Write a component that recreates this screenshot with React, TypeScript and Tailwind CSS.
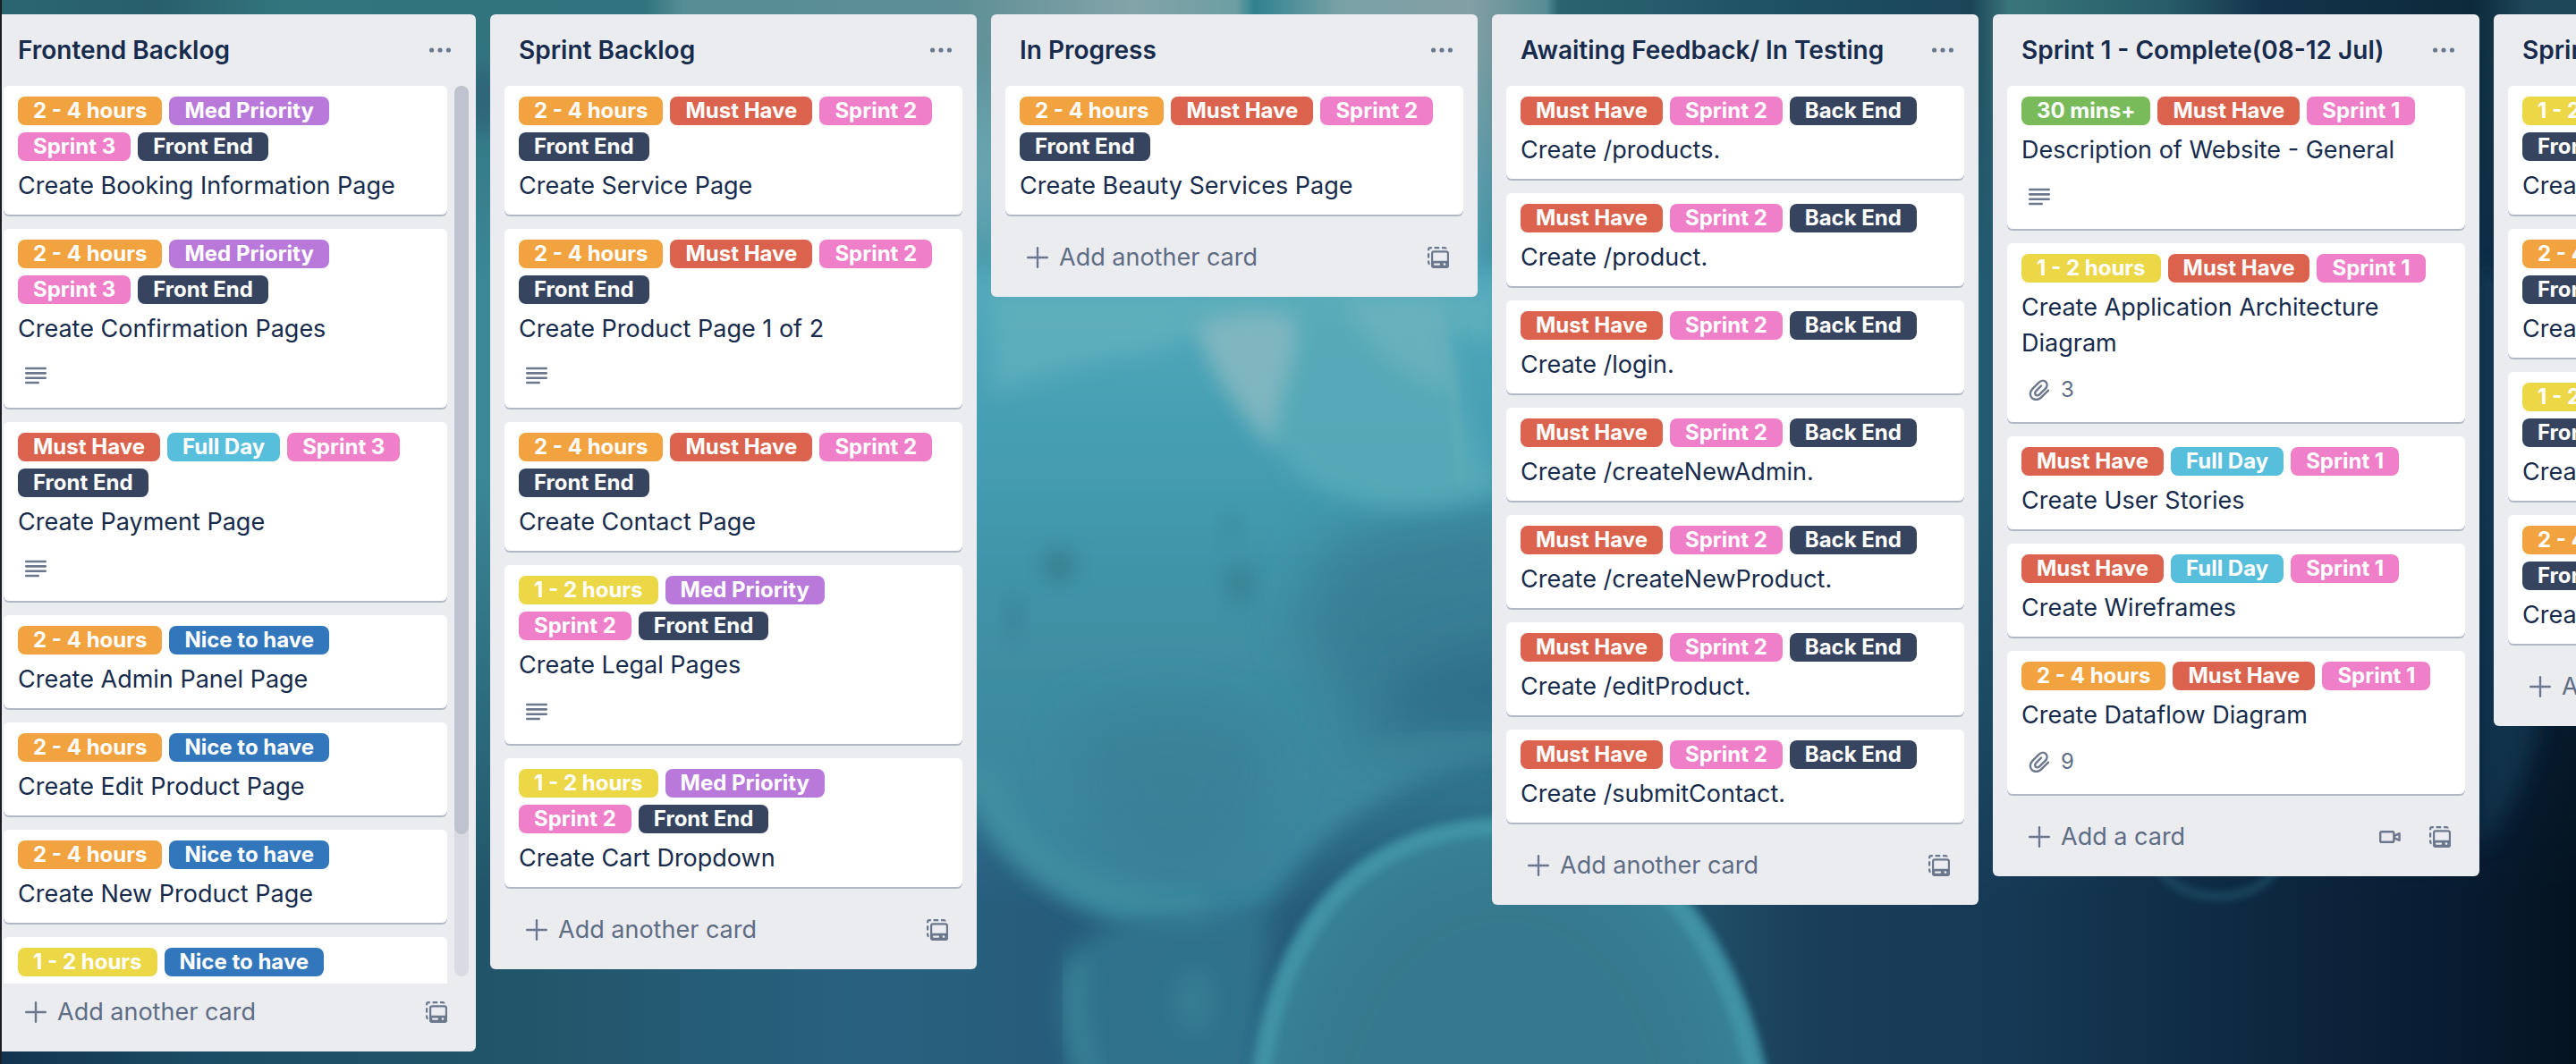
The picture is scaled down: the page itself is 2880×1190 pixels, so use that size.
import React from "react";

type LabelKind = "h24" | "h12" | "m30" | "must" | "med" | "nice" | "day" | "s1" | "s2" | "s3" | "front" | "back";

const LABELS: Record<LabelKind, { text: string; color: string }> = {
  h24: { text: "2 - 4 hours", color: "bg-[#f2a23f]" },
  h12: { text: "1 - 2 hours", color: "bg-[#ecd747]" },
  m30: { text: "30 mins+", color: "bg-[#79bb5b]" },
  must: { text: "Must Have", color: "bg-[#db634d]" },
  med: { text: "Med Priority", color: "bg-[#b879db]" },
  nice: { text: "Nice to have", color: "bg-[#3277bb]" },
  day: { text: "Full Day", color: "bg-[#57bedc]" },
  s1: { text: "Sprint 1", color: "bg-[#ef7fc8]" },
  s2: { text: "Sprint 2", color: "bg-[#ef7fc8]" },
  s3: { text: "Sprint 3", color: "bg-[#ef7fc8]" },
  front: { text: "Front End", color: "bg-[#374460]" },
  back: { text: "Back End", color: "bg-[#374460]" },
};

type CardData = { title: string; labels: LabelKind[]; description?: boolean; attachments?: number };
type ListData = { title: string; cards: CardData[]; add: string; video?: boolean; scrolls?: boolean };

const LISTS: ListData[] = [
  {
    title: "Frontend Backlog",
    add: "Add another card",
    scrolls: true,
    cards: [
      { title: "Create Booking Information Page", labels: ["h24", "med", "s3", "front"] },
      { title: "Create Confirmation Pages", labels: ["h24", "med", "s3", "front"], description: true },
      { title: "Create Payment Page", labels: ["must", "day", "s3", "front"], description: true },
      { title: "Create Admin Panel Page", labels: ["h24", "nice"] },
      { title: "Create Edit Product Page", labels: ["h24", "nice"] },
      { title: "Create New Product Page", labels: ["h24", "nice"] },
      { title: "", labels: ["h12", "nice"] },
    ],
  },
  {
    title: "Sprint Backlog",
    add: "Add another card",
    cards: [
      { title: "Create Service Page", labels: ["h24", "must", "s2", "front"] },
      { title: "Create Product Page 1 of 2", labels: ["h24", "must", "s2", "front"], description: true },
      { title: "Create Contact Page", labels: ["h24", "must", "s2", "front"] },
      { title: "Create Legal Pages", labels: ["h12", "med", "s2", "front"], description: true },
      { title: "Create Cart Dropdown", labels: ["h12", "med", "s2", "front"] },
    ],
  },
  {
    title: "In Progress",
    add: "Add another card",
    cards: [{ title: "Create Beauty Services Page", labels: ["h24", "must", "s2", "front"] }],
  },
  {
    title: "Awaiting Feedback/ In Testing",
    add: "Add another card",
    cards: [
      { title: "Create /products.", labels: ["must", "s2", "back"] },
      { title: "Create /product.", labels: ["must", "s2", "back"] },
      { title: "Create /login.", labels: ["must", "s2", "back"] },
      { title: "Create /createNewAdmin.", labels: ["must", "s2", "back"] },
      { title: "Create /createNewProduct.", labels: ["must", "s2", "back"] },
      { title: "Create /editProduct.", labels: ["must", "s2", "back"] },
      { title: "Create /submitContact.", labels: ["must", "s2", "back"] },
    ],
  },
  {
    title: "Sprint 1 - Complete(08-12 Jul)",
    add: "Add a card",
    video: true,
    cards: [
      { title: "Description of Website - General", labels: ["m30", "must", "s1"], description: true },
      { title: "Create Application Architecture Diagram", labels: ["h12", "must", "s1"], attachments: 3 },
      { title: "Create User Stories", labels: ["must", "day", "s1"] },
      { title: "Create Wireframes", labels: ["must", "day", "s1"] },
      { title: "Create Dataflow Diagram", labels: ["h24", "must", "s1"], attachments: 9 },
    ],
  },
  {
    title: "Sprint 2",
    add: "Add a card",
    cards: [
      { title: "Create", labels: ["h12", "must", "s2", "front"] },
      { title: "Create", labels: ["h24", "must", "s2", "front"] },
      { title: "Create", labels: ["h12", "must", "s2", "front"] },
      { title: "Create", labels: ["h24", "must", "s2", "front"] },
    ],
  },
];

function DotsIcon() {
  return (
    <svg viewBox="0 0 24 24" className="size-6" fill="#6b778c">
      <circle cx="2.6" cy="12" r="2.6" />
      <circle cx="12" cy="12" r="2.6" />
      <circle cx="21.4" cy="12" r="2.6" />
    </svg>
  );
}

function DescriptionIcon() {
  return (
    <svg viewBox="0 0 24 24" className="size-6" stroke="#6b778c" strokeWidth="2.6" strokeLinecap="round">
      <path d="M1.3 4h21.4M1.3 9.4h21.4M1.3 14.7h21.4M1.3 20h13.4" />
    </svg>
  );
}

function PlusIcon() {
  return (
    <svg viewBox="0 0 24 24" className="size-6" stroke="#6b778c" strokeWidth="2.4" strokeLinecap="round">
      <path d="M12 1.2v21.6M1.2 12h21.6" />
    </svg>
  );
}

function AttachmentIcon() {
  return (
    <svg viewBox="0 0 24 24" className="size-6" fill="none" stroke="#6b778c" strokeWidth="2.4" strokeLinecap="round" strokeLinejoin="round">
      <path d="M22 12.6l-7.8 7.8c-3.4 3.4-7.8 3.2-10.4.8-2.6-2.6-2.8-7 .6-10.4l7-7c2.4-2.4 5.8-2.6 7.8-.7 2 2 1.8 5.3-.6 7.7l-6.4 6.4c-1.3 1.3-3.2 1.5-4.3.4-1.1-1.1-.9-3 .4-4.3l5.8-5.8" />
    </svg>
  );
}

function TemplateIcon() {
  return (
    <svg viewBox="0 0 24 24" className="size-6" fill="none" stroke="#6b778c" strokeWidth="2.2">
      <path d="M1.1 4.2V3.2Q1.1 1.1 3.2 1.1h1.6M7.6 1.1h5.6M16 1.1h3.2Q20.6 1.2 20.8 2.4M1.1 7.2v5.4M1.1 15.4v2q0 1.6 1.5 1.9" />
      <rect x="5.1" y="5.3" width="17.8" height="17.4" rx="2.2" />
      <path d="M4 15.8h20v5.2q0 3-3 3H7q-3 0-3-3z" fill="#6b778c" stroke="none" />
      <path d="M8 19.6h5" stroke="#ebecf0" strokeLinecap="round" />
      <circle cx="19" cy="19.6" r="1.3" fill="#ebecf0" stroke="none" />
    </svg>
  );
}

function VideoIcon() {
  return (
    <svg viewBox="0 0 24 24" className="size-6" fill="none" stroke="#6b778c" strokeWidth="2.4" strokeLinejoin="round">
      <rect x="1.2" y="6.2" width="15.2" height="11.6" rx="1.6" />
      <path d="M17.2 10.6l5.4-2.4v7.6l-5.4-2.4z" />
    </svg>
  );
}

function Label({ kind }: { kind: LabelKind }) {
  const { text, color } = LABELS[kind];
  return <span className={`h-8 rounded-lg px-[17px] text-2xl/8 font-bold whitespace-nowrap text-white ${color}`}>{text}</span>;
}

function Card({ card }: { card: CardData }) {
  return (
    <li className="shrink-0 rounded-md bg-white px-4 pt-3 pb-1 shadow-[0_2px_0_#b3b8c7]">
      <div className="flex flex-wrap gap-2 pr-2">
        {card.labels.map((kind) => (
          <Label key={kind} kind={kind} />
        ))}
      </div>
      <p className="my-2 min-h-10 text-[27px] leading-10 text-[#172b4d]">{card.title}</p>
      {(card.description || card.attachments) && (
        <div className="mb-2 flex h-12 items-center gap-3 pl-2 text-2xl text-[#5e6c84]">
          {card.description ? <DescriptionIcon /> : <AttachmentIcon />}
          {card.attachments && <span>{card.attachments}</span>}
        </div>
      )}
    </li>
  );
}

function List({ list }: { list: ListData }) {
  return (
    <section className="flex max-h-full w-[544px] shrink-0 flex-col rounded-md bg-[#ebecf0] pb-3">
      <header className="flex h-20 shrink-0 items-center justify-between pr-7 pl-8">
        <h2 className="text-[28px] font-semibold text-[#172b4d]">{list.title}</h2>
        <button type="button" aria-label={`${list.title} actions`}>
          <DotsIcon />
        </button>
      </header>
      <div className="flex min-h-0 pl-4">
        <ul className={`flex min-w-0 flex-1 flex-col gap-4 overflow-hidden ${list.scrolls ? "" : "pb-4"}`}>
          {list.cards.map((card, i) => (
            <Card key={i} card={card} />
          ))}
        </ul>
        {list.scrolls ? (
          <div className="mr-2 mb-2 ml-2 flex w-4 flex-col rounded-full bg-[#dadbe2]">
            <div className="h-[84%] rounded-full bg-[#bfc3d0]" />
          </div>
        ) : (
          <div className="w-4" />
        )}
      </div>
      <footer className="flex h-16 shrink-0 items-center pr-8 pl-10">
        <button type="button" className="flex flex-1 items-center gap-3 text-[27px] text-[#5e6c84]">
          <PlusIcon />
          {list.add}
        </button>
        {list.video && (
          <button type="button" aria-label="Record a video" className="mr-8">
            <VideoIcon />
          </button>
        )}
        <button type="button" aria-label="Create from template">
          <TemplateIcon />
        </button>
      </footer>
    </section>
  );
}

/* Underwater jellyfish wallpaper. */
function Wallpaper() {
  return (
    <svg aria-hidden="true" viewBox="0 0 2880 1190" preserveAspectRatio="none" className="absolute inset-0 size-full">
      <defs>
        <linearGradient id="sea" x1="0" x2="1" y1="0" y2="0">
          <stop offset="0" stopColor="#2c6574" />
          <stop offset="0.19" stopColor="#3b8798" />
          <stop offset="0.38" stopColor="#4599ab" />
          <stop offset="0.575" stopColor="#4399ad" />
          <stop offset="0.62" stopColor="#1f5368" />
          <stop offset="0.77" stopColor="#235b72" />
          <stop offset="0.88" stopColor="#0e2b43" />
          <stop offset="0.96" stopColor="#0f2d48" />
          <stop offset="1" stopColor="#0a2238" />
        </linearGradient>
        <linearGradient id="surface" x1="0" x2="1" y1="0" y2="0">
          <stop offset="0" stopColor="#2a6672" />
          <stop offset="0.06" stopColor="#295f6c" />
          <stop offset="0.11" stopColor="#32757d" />
          <stop offset="0.25" stopColor="#31737e" />
          <stop offset="0.265" stopColor="#578d94" />
          <stop offset="0.37" stopColor="#5d8e95" />
          <stop offset="0.44" stopColor="#83a4a9" />
          <stop offset="0.48" stopColor="#6c9ea3" />
          <stop offset="0.487" stopColor="#2f8290" />
          <stop offset="0.52" stopColor="#78a1a6" />
          <stop offset="0.57" stopColor="#839fa4" />
          <stop offset="0.6" stopColor="#578d95" />
          <stop offset="0.605" stopColor="#2b6470" />
          <stop offset="0.7" stopColor="#1d4f62" />
          <stop offset="0.765" stopColor="#1c4558" />
          <stop offset="0.78" stopColor="#397679" />
          <stop offset="0.84" stopColor="#275d69" />
          <stop offset="0.88" stopColor="#14324a" />
          <stop offset="0.96" stopColor="#0d2a3b" />
          <stop offset="0.98" stopColor="#1d4658" />
          <stop offset="1" stopColor="#1d4658" />
        </linearGradient>
        <linearGradient id="deep" x1="0" x2="1" y1="0" y2="0">
          <stop offset="0" stopColor="#12334f" />
          <stop offset="0.08" stopColor="#1c4d66" />
          <stop offset="0.2" stopColor="#215569" />
          <stop offset="0.33" stopColor="#28617f" />
          <stop offset="0.46" stopColor="#265a78" />
          <stop offset="0.6" stopColor="#2b6780" />
          <stop offset="0.7" stopColor="#1a3f5a" />
          <stop offset="0.78" stopColor="#163955" />
          <stop offset="0.86" stopColor="#0f2b43" />
          <stop offset="0.95" stopColor="#081c32" />
          <stop offset="1" stopColor="#041320" />
        </linearGradient>
        <linearGradient id="fade" x1="0" x2="0" y1="0" y2="1">
          <stop offset="0.45" stopColor="#fff" stopOpacity="0" />
          <stop offset="0.85" stopColor="#fff" />
        </linearGradient>
        <linearGradient id="top" x1="0" x2="0" y1="0" y2="1">
          <stop offset="0.04" stopColor="#fff" />
          <stop offset="0.26" stopColor="#fff" stopOpacity="0" />
        </linearGradient>
        <mask id="lower">
          <rect width="2880" height="1190" fill="url(#fade)" />
        </mask>
        <mask id="upper">
          <rect width="2880" height="1190" fill="url(#top)" />
        </mask>
        <linearGradient id="body" x1="0" x2="0" y1="330" y2="1060" gradientUnits="userSpaceOnUse">
          <stop offset="0" stopColor="#52a9b9" />
          <stop offset="0.2" stopColor="#459fb3" />
          <stop offset="0.55" stopColor="#3f8ea2" />
          <stop offset="1" stopColor="#38819a" />
        </linearGradient>
        <filter id="blurS" x="-30%" y="-30%" width="160%" height="160%">
          <feGaussianBlur stdDeviation="5" />
        </filter>
        <filter id="blurM" x="-50%" y="-50%" width="200%" height="200%">
          <feGaussianBlur stdDeviation="12" />
        </filter>
        <filter id="blurL" x="-50%" y="-50%" width="200%" height="200%">
          <feGaussianBlur stdDeviation="30" />
        </filter>
      </defs>
      <rect width="2880" height="1190" fill="url(#sea)" />
      <rect width="2880" height="1190" fill="url(#deep)" mask="url(#lower)" />
      <rect width="2880" height="1190" fill="url(#surface)" mask="url(#upper)" />
      <ellipse cx="1100" cy="190" rx="16" ry="90" fill="#84b9c1" filter="url(#blurL)" />
      <ellipse cx="540" cy="110" rx="20" ry="40" fill="#2d6576" filter="url(#blurM)" />

      {/* large bell in the middle of the frame */}
      <path
        d="M1040 300H1720V820C1640 850 1500 890 1430 1000C1400 1035 1340 1040 1260 1035C1180 1010 1110 960 1075 880C1050 800 1040 500 1040 300Z"
        fill="url(#body)"
        filter="url(#blurM)"
      />
      <path d="M1500 600Q1600 570 1740 560V850Q1620 830 1530 850Q1480 760 1450 700Q1460 640 1500 600Z" fill="#35788f" opacity="0.7" filter="url(#blurL)" />
      <path d="M1560 760Q1640 720 1740 720V840Q1630 800 1560 830Z" fill="#296884" opacity="0.7" filter="url(#blurL)" />
      <path d="M1510 850Q1610 825 1720 830" fill="none" stroke="#3d8599" strokeWidth="26" opacity="0.6" filter="url(#blurM)" />
      <path d="M1200 820Q1300 760 1420 820Q1420 960 1320 985Q1200 960 1200 820Z" fill="#377f94" opacity="0.7" filter="url(#blurL)" />
      <path d="M1092 860C1130 960 1210 1015 1350 1020" fill="none" stroke="#4596a2" strokeWidth="36" opacity="0.5" filter="url(#blurM)" />

      {/* pale translucent folds */}
      <path d="M1110 330H1670V380Q1500 350 1340 365Q1300 400 1240 400Q1160 420 1110 440Z" fill="#68b4c0" opacity="0.6" filter="url(#blurM)" />
      <path
        d="M1340 352C1420 325 1560 330 1610 350C1630 410 1640 480 1682 545C1620 575 1520 580 1450 530C1400 470 1360 420 1340 352Z"
        fill="#58abb9"
        opacity="0.85"
        filter="url(#blurM)"
      />
      <path d="M1335 365C1370 345 1440 345 1450 360C1450 420 1420 460 1425 505C1400 470 1365 440 1335 365Z" fill="#8abac1" opacity="0.8" filter="url(#blurM)" />
      <path d="M1500 335H1610L1625 440Q1560 420 1530 380Z" fill="#7ab8c1" opacity="0.5" filter="url(#blurM)" />
      <path d="M1605 345Q1630 430 1632 540" fill="none" stroke="#74b4bd" strokeWidth="7" opacity="0.4" filter="url(#blurS)" />

      {/* spots */}
      <ellipse cx="1184" cy="632" rx="18" ry="18" fill="#357384" opacity="0.7" filter="url(#blurM)" />
      <ellipse cx="1386" cy="652" rx="18" ry="24" fill="#36798a" opacity="0.6" filter="url(#blurM)" />
      <ellipse cx="1376" cy="590" rx="10" ry="14" fill="#38808f" opacity="0.5" filter="url(#blurM)" />
      <ellipse cx="1134" cy="690" rx="9" ry="26" fill="#377a90" opacity="0.6" filter="url(#blurM)" />

      {/* trailing shapes below the large bell */}
      <path d="M1200 1060Q1260 1010 1420 1020L1400 1250H1230Q1160 1140 1200 1060Z" fill="#317790" opacity="0.8" filter="url(#blurM)" />
      <path d="M1205 1075Q1190 1140 1225 1220" fill="none" stroke="#40909c" strokeWidth="28" opacity="0.5" filter="url(#blurM)" />
      <ellipse cx="1335" cy="1120" rx="26" ry="40" fill="#3b8697" opacity="0.5" filter="url(#blurM)" />

      {/* small bell at the bottom edge */}
      <path d="M1392 1260C1399 1080 1480 925 1670 915C1850 905 1955 1040 1988 1260Z" fill="#388196" filter="url(#blurS)" />
      <path d="M1440 1260C1450 1100 1530 975 1670 965C1820 960 1900 1080 1930 1260Z" fill="#347389" opacity="0.55" filter="url(#blurL)" />
      <path d="M1406 1260C1414 1080 1490 935 1670 925C1840 918 1940 1050 1973 1260" fill="none" stroke="#47a0ad" strokeWidth="18" opacity="0.6" filter="url(#blurS)" />

      {/* faint rim on the right */}
      <path d="M2410 965C2430 1010 2520 1020 2550 965" fill="none" stroke="#25647c" strokeWidth="8" opacity="0.6" filter="url(#blurS)" />
      <path d="M2785 300Q2900 420 2840 800Q2820 900 2770 950V300Z" fill="#16405a" opacity="0.6" filter="url(#blurM)" />
    </svg>
  );
}

export default function App() {
  return (
    <main className="relative h-screen overflow-hidden bg-[#1f5068] font-[Inter,'Liberation_Sans',sans-serif]">
      <Wallpaper />
      <div className="relative -ml-3 flex h-full items-start gap-4 pt-4 pb-[14px]">
        {LISTS.map((list) => (
          <List key={list.title} list={list} />
        ))}
      </div>
      <div className="absolute inset-y-0 left-0 w-0.5 bg-[#1c1f22]" />
    </main>
  );
}
